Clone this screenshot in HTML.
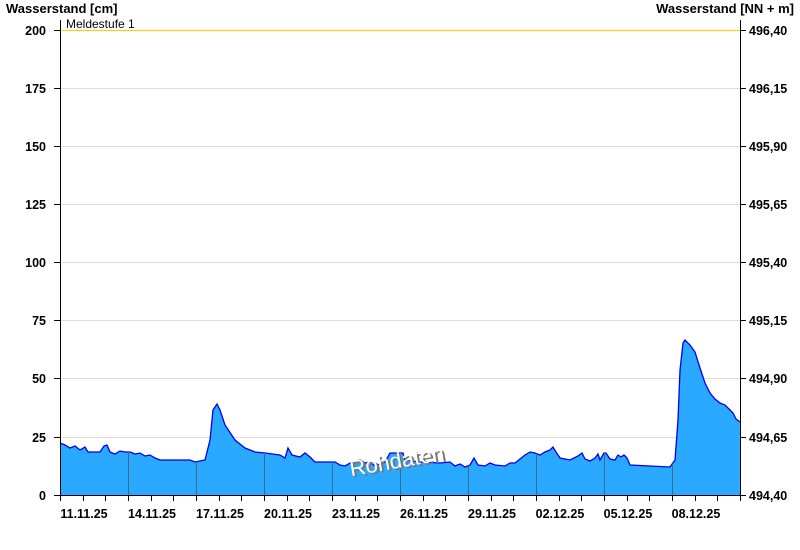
<!DOCTYPE html>
<html><head><meta charset="utf-8"><style>
body{margin:0;background:#fff;}
svg{display:block;font-family:"Liberation Sans",Arial,sans-serif;}
</style></head><body>
<svg width="800" height="550" viewBox="0 0 800 550" xmlns="http://www.w3.org/2000/svg">
<defs>
<clipPath id="c"><polygon points="60,495 60,443 65,445 70,448 75,446 80,450 85,447 88,452 100,452 104,446 107,445 110,452 115,454 120,451 125,452 130,452 135,454 140,453 145,456 150,455 155,458 160,460 190,460 195,462 205,460 210,440 213,410 217,404 220,410 225,425 235,440 245,448 255,452 265,453 280,455 285,458 288,448 292,455 300,457 305,453 310,457 315,462 335,462 340,465 345,466 352,462 360,460 365,463 370,462 375,466 385,462 390,453 403,453 405,460 420,462 440,463 450,462 455,466 460,464 465,467 470,465 474,458 478,465 485,466 490,463 495,465 505,466 510,463 515,463 525,455 530,452 535,453 540,455 545,452 550,450 553,447 556,452 560,458 570,460 578,456 582,453 585,459 590,461 595,458 598,454 600,460 604,453 606,453 610,459 615,460 618,455 621,457 624,455 627,458 630,465 650,466 670,467 675,460 678,420 680,370 683,343 685,340 690,345 695,352 700,368 705,383 710,393 715,399 720,403 725,405 730,410 733,413 736,419 740,422 740,495"/></clipPath>
</defs>
<g stroke="#dcdcdc" stroke-width="1">
<line x1="60" x2="740" y1="88.5" y2="88.5"/><line x1="60" x2="740" y1="146.5" y2="146.5"/><line x1="60" x2="740" y1="204.5" y2="204.5"/><line x1="60" x2="740" y1="262.5" y2="262.5"/><line x1="60" x2="740" y1="320.5" y2="320.5"/><line x1="60" x2="740" y1="378.5" y2="378.5"/><line x1="60" x2="740" y1="437.5" y2="437.5"/>
</g>
<line x1="60" x2="740" y1="30.5" y2="30.5" stroke="#ffcc22" stroke-width="1.2"/>
<rect x="60" y="300" width="680" height="195" fill="#29a9ff" clip-path="url(#c)"/>
<polyline fill="none" stroke="#0000ee" stroke-width="1.3" points="60,443 65,445 70,448 75,446 80,450 85,447 88,452 100,452 104,446 107,445 110,452 115,454 120,451 125,452 130,452 135,454 140,453 145,456 150,455 155,458 160,460 190,460 195,462 205,460 210,440 213,410 217,404 220,410 225,425 235,440 245,448 255,452 265,453 280,455 285,458 288,448 292,455 300,457 305,453 310,457 315,462 335,462 340,465 345,466 352,462 360,460 365,463 370,462 375,466 385,462 390,453 403,453 405,460 420,462 440,463 450,462 455,466 460,464 465,467 470,465 474,458 478,465 485,466 490,463 495,465 505,466 510,463 515,463 525,455 530,452 535,453 540,455 545,452 550,450 553,447 556,452 560,458 570,460 578,456 582,453 585,459 590,461 595,458 598,454 600,460 604,453 606,453 610,459 615,460 618,455 621,457 624,455 627,458 630,465 650,466 670,467 675,460 678,420 680,370 683,343 685,340 690,345 695,352 700,368 705,383 710,393 715,399 720,403 725,405 730,410 733,413 736,419 740,422"/>
<g clip-path="url(#c)" stroke="#3a6a8a" stroke-width="1">
<line x1="128.5" x2="128.5" y1="300" y2="495"/><line x1="196.5" x2="196.5" y1="300" y2="495"/><line x1="264.5" x2="264.5" y1="300" y2="495"/><line x1="332.5" x2="332.5" y1="300" y2="495"/><line x1="400.5" x2="400.5" y1="300" y2="495"/><line x1="468.5" x2="468.5" y1="300" y2="495"/><line x1="536.5" x2="536.5" y1="300" y2="495"/><line x1="604.5" x2="604.5" y1="300" y2="495"/><line x1="672.5" x2="672.5" y1="300" y2="495"/>
</g>
<g stroke="#000" stroke-width="1">
<line x1="60.5" x2="60.5" y1="20" y2="501"/>
<line x1="740.5" x2="740.5" y1="20" y2="501"/>
<line x1="54" x2="746" y1="495.5" y2="495.5"/>
<line x1="54" x2="60" y1="30.5" y2="30.5"/><line x1="54" x2="60" y1="88.5" y2="88.5"/><line x1="54" x2="60" y1="146.5" y2="146.5"/><line x1="54" x2="60" y1="204.5" y2="204.5"/><line x1="54" x2="60" y1="262.5" y2="262.5"/><line x1="54" x2="60" y1="320.5" y2="320.5"/><line x1="54" x2="60" y1="378.5" y2="378.5"/><line x1="54" x2="60" y1="437.5" y2="437.5"/>
<line x1="740" x2="746" y1="30.5" y2="30.5"/><line x1="740" x2="746" y1="88.5" y2="88.5"/><line x1="740" x2="746" y1="146.5" y2="146.5"/><line x1="740" x2="746" y1="204.5" y2="204.5"/><line x1="740" x2="746" y1="262.5" y2="262.5"/><line x1="740" x2="746" y1="320.5" y2="320.5"/><line x1="740" x2="746" y1="378.5" y2="378.5"/><line x1="740" x2="746" y1="437.5" y2="437.5"/>
<path d="M60.5 495V501M83.5 495V501M105.5 495V501M128.5 495V501M151.5 495V501M173.5 495V501M196.5 495V501M219.5 495V501M241.5 495V501M264.5 495V501M287.5 495V501M309.5 495V501M332.5 495V501M355.5 495V501M377.5 495V501M400.5 495V501M423.5 495V501M445.5 495V501M468.5 495V501M491.5 495V501M513.5 495V501M536.5 495V501M559.5 495V501M581.5 495V501M604.5 495V501M627.5 495V501M649.5 495V501M672.5 495V501M695.5 495V501M717.5 495V501M740.5 495V501"/>
</g>
<g font-size="12.5" font-weight="bold" fill="#000">
<text x="6" y="13" font-size="13">Wasserstand [cm]</text>
<text x="794" y="13" text-anchor="end" font-size="13">Wasserstand [NN + m]</text>
<g text-anchor="end">
<text x="46" y="35">200</text><text x="46" y="93">175</text><text x="46" y="151">150</text><text x="46" y="209">125</text><text x="46" y="267">100</text><text x="46" y="325">75</text><text x="46" y="383">50</text><text x="46" y="442">25</text><text x="46" y="500">0</text>
</g>
<g>
<text x="749" y="35">496,40</text><text x="749" y="93">496,15</text><text x="749" y="151">495,90</text><text x="749" y="209">495,65</text><text x="749" y="267">495,40</text><text x="749" y="325">495,15</text><text x="749" y="383">494,90</text><text x="749" y="442">494,65</text><text x="749" y="500">494,40</text>
</g>
<g text-anchor="middle">
<text x="84" y="518">11.11.25</text><text x="152" y="518">14.11.25</text><text x="220" y="518">17.11.25</text><text x="288" y="518">20.11.25</text><text x="356" y="518">23.11.25</text><text x="424" y="518">26.11.25</text><text x="492" y="518">29.11.25</text><text x="560" y="518">02.12.25</text><text x="628" y="518">05.12.25</text><text x="696" y="518">08.12.25</text>
</g>
</g>
<text x="66" y="28" font-size="12" fill="#000">Meldestufe 1</text>
<g transform="translate(398,468) rotate(-10)" font-size="22" text-anchor="middle">
<text x="2" y="2" fill="#777">Rohdaten</text>
<text x="0" y="0" fill="#fff">Rohdaten</text>
</g>
</svg>
</body></html>
